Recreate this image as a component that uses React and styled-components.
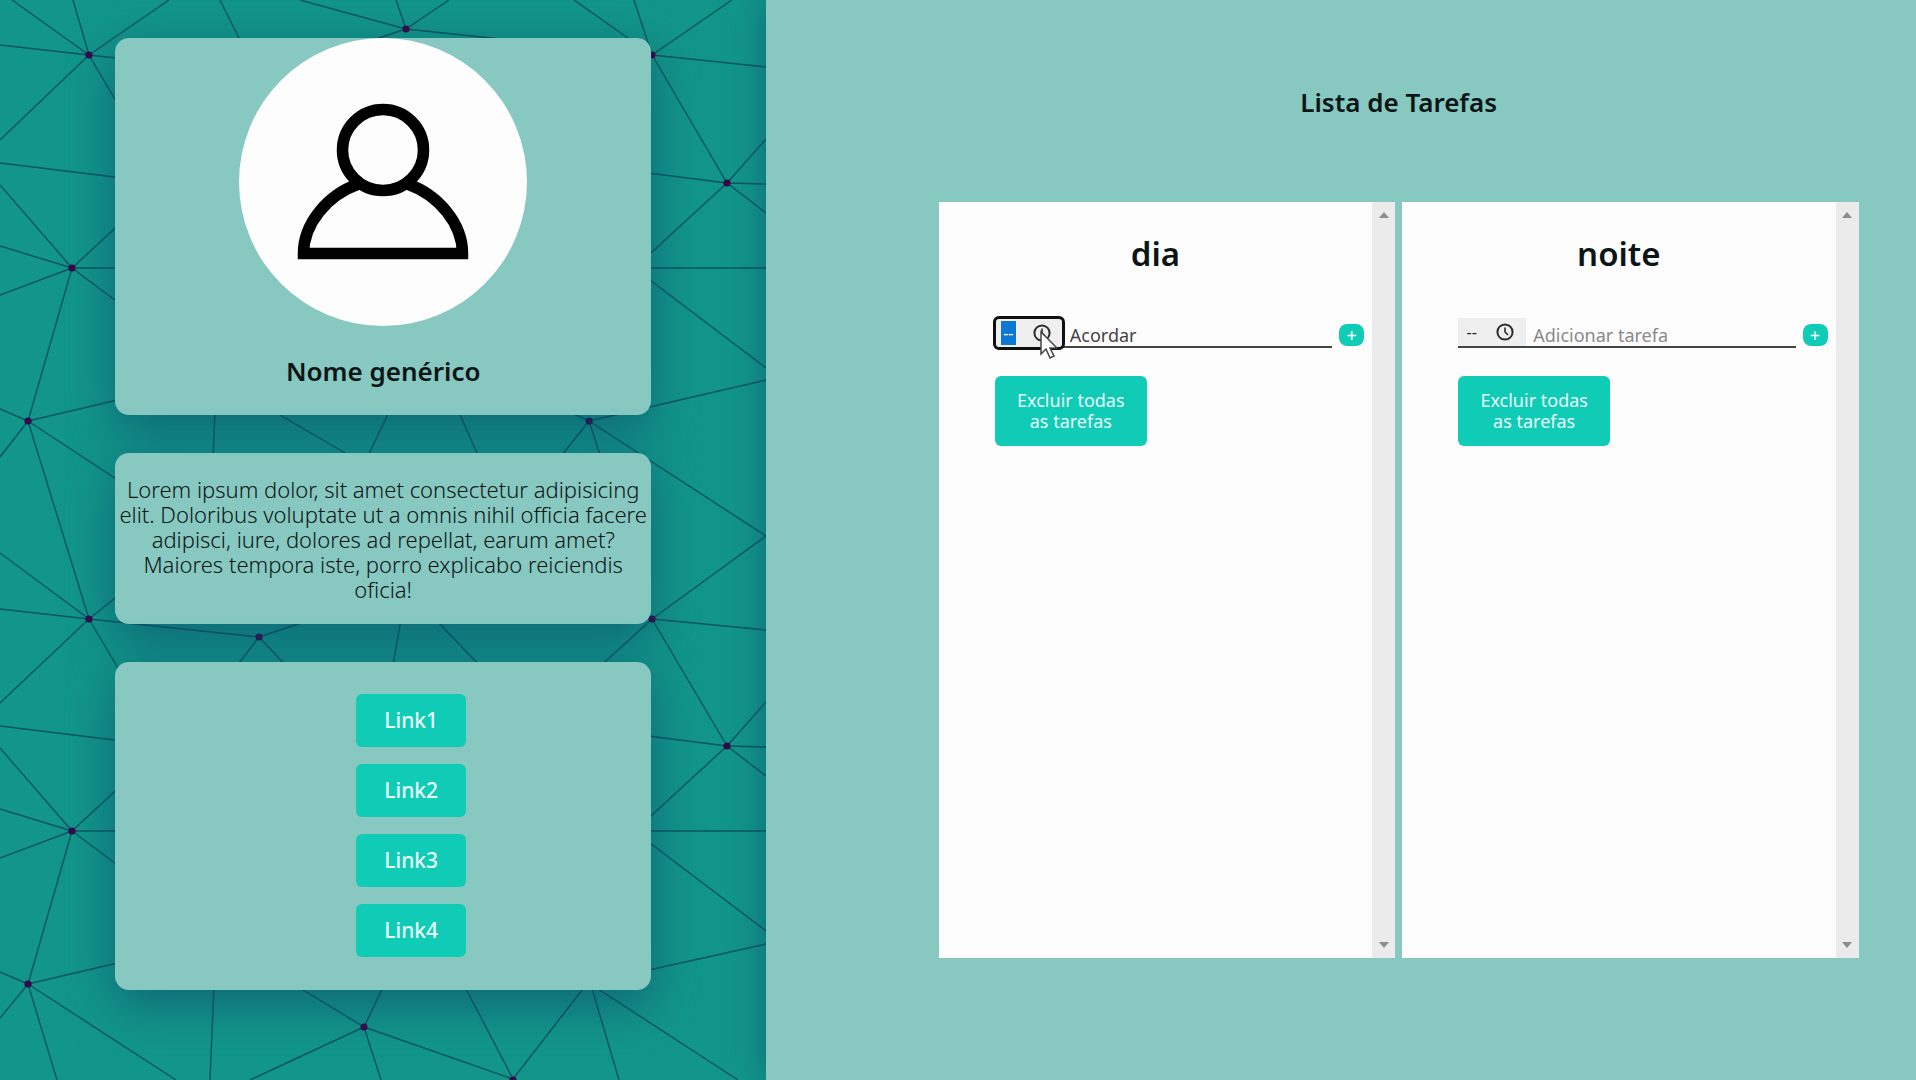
import React from "react";
import styled, { createGlobalStyle } from "styled-components";

const color = {
  panel: "#12968a",
  soft: "#87c8c0",
  accent: "#10cbb5",
  paper: "#fdfdfe",
  ink: "#0c1515",
  line: "#0c5560",
  node: "#36084a",
};

const headingFont = `"Noto Sans", "Open Sans", sans-serif`;
const bodyFont = `"Noto Sans", "Open Sans", sans-serif`;

const GlobalStyle = createGlobalStyle`
  *, *::before, *::after { box-sizing: border-box; }
  body { margin: 0; font-family: ${bodyFont}; color: ${color.ink}; }
  button, input { font: inherit; }
`;

const Page = styled.div`
  display: grid;
  grid-template-columns: 40% 60%;
  min-height: 100vh;
`;

const Sidebar = styled.aside`
  position: relative;
  overflow: hidden;
  display: flex;
  flex-direction: column;
  align-items: center;
  gap: 38px;
  padding: 38px 0 88px;
  background: ${color.panel};
`;

const Web = styled.svg`
  position: absolute;
  top: 0;
  left: 0;
  width: 766px;
  height: 1080px;
`;

const Card = styled.section`
  position: relative;
  width: 70%;
  border-radius: 14px;
  background: ${color.soft};
  box-shadow: 0 14px 48px 2px rgba(14, 70, 105, 0.58);
`;

const ProfileCard = styled(Card)`
  display: flex;
  flex-direction: column;
  align-items: center;
  gap: 26px;
  padding-bottom: 25px;
`;

const Avatar = styled.svg`
  display: block;
  width: 288px;
  height: 288px;
  border-radius: 50%;
  background: ${color.paper};
`;

const Name = styled.h1`
  margin: 0;
  font: 600 26px/38px ${headingFont};
`;

const AboutCard = styled(Card)`
  padding: 24px 0 22px;
  text-align: center;
`;

const About = styled.p`
  margin: 0;
  font-size: 22px;
  font-weight: 300;
  line-height: 25px;
  white-space: nowrap;
`;

const LinkCard = styled(Card)`
  padding: 32px 0 33px 56px;
`;

const LinkList = styled.ul`
  display: flex;
  flex-direction: column;
  align-items: center;
  gap: 17px;
  margin: 0;
  padding: 0;
  list-style: none;
`;

const LinkButton = styled.a`
  display: block;
  padding: 12px 28px;
  border-radius: 6px;
  background: ${color.accent};
  color: #eafffb;
  font-size: 21px;
  font-weight: 500;
  line-height: 29px;
  text-decoration: none;
`;

const Main = styled.main`
  position: relative;
  padding: 0 5% 0 15%;
  background: ${color.soft};
  box-shadow: 0 0 36px rgba(14, 70, 105, 0.6);
`;

const Title = styled.h2`
  margin: 0;
  padding: 83px 0 81px;
  text-align: center;
  font: 600 26px/38px ${headingFont};
`;

const Boards = styled.div`
  display: grid;
  grid-template-columns: 1fr 1fr;
  gap: 7px;
  height: 70vh;
`;

const Board = styled.section`
  display: flex;
  background: ${color.paper};
`;

const BoardBody = styled.div`
  flex: 1;
  min-width: 0;
  padding: 28px 8px 0 56px;
`;

const BoardTitle = styled.h3`
  margin: 0 48px 40px 0;
  text-align: center;
  font: 600 33px/48px ${headingFont};
`;

const ScrollTrack = styled.div`
  display: flex;
  flex-direction: column;
  justify-content: space-between;
  align-items: center;
  width: 23px;
  padding: 10px 0;
  background: #ebebec;
`;

const Arrow = styled.svg`
  width: 10px;
  height: 6px;
  fill: #8d8d90;
`;

const TaskForm = styled.form`
  display: flex;
  align-items: flex-end;
  gap: 7px;
`;

const Field = styled.div`
  display: flex;
  flex: 1;
  min-width: 0;
  height: 30px;
  border-bottom: 2px solid #444;
`;

const TimeBox = styled.div`
  display: flex;
  align-items: center;
  justify-content: space-between;
  width: 68px;
  height: 28px;
  padding: 0 12px 0 6px;
  background: #efefef;
  ${(p) =>
    p.$focused &&
    `height: 30px;
     border-radius: 4px;
     outline: 3px solid #101010;
     outline-offset: -1px;`}
`;

const TimeInput = styled.input`
  width: 15px;
  height: 24px;
  padding: 0;
  border: 0;
  text-align: center;
  font-size: 16px;
  outline: none;
  background: ${(p) => (p.$focused ? "#0c78d3" : "transparent")};
  color: ${(p) => (p.$focused ? "#fff" : "#222")};
`;

const ClockButton = styled.button`
  display: flex;
  padding: 0;
  border: 0;
  background: none;
`;

const TaskInput = styled.input`
  flex: 1;
  min-width: 0;
  padding: 5px 0 0 7px;
  border: 0;
  outline: none;
  background: transparent;
  color: #444;
  font-size: 18px;
  font-weight: 400;
  &::placeholder { color: #8a8a8a; opacity: 1; }
`;

const AddButton = styled.button`
  width: 25px;
  height: 22px;
  margin-bottom: 2px;
  padding: 0;
  border: 0;
  border-radius: 8px;
  background: ${color.accent};
  color: #eafffb;
  font-size: 18px;
  font-weight: 500;
  line-height: 22px;
`;

const ClearButton = styled.button`
  display: block;
  width: 152px;
  margin-top: 28px;
  padding: 14px 8px;
  border: 0;
  border-radius: 6px;
  background: ${color.accent};
  color: #eafffb;
  font-size: 18px;
  line-height: 21px;
`;

const Pointer = styled.svg`
  position: absolute;
  left: 43px;
  top: 12px;
  width: 20px;
  height: 30px;
`;

const TimeArea = styled.div`
  position: relative;
`;

const webLines = [
  [12, 0, 89, 55], [73, 0, 89, 55], [169, 0, 89, 55], [0, 45, 89, 55],
  [89, 55, 0, 140], [89, 55, 164, 183], [89, 55, 259, 74], [0, 163, 164, 183],
  [0, 185, 72, 268], [0, 246, 72, 268], [0, 295, 72, 268], [72, 268, 164, 183],
  [72, 268, 140, 268], [72, 268, 203, 366], [72, 268, 28, 421],
  [0, 409, 28, 421], [28, 421, 0, 457], [28, 421, 160, 390], [28, 421, 203, 536],
  [28, 421, 89, 619],
  [220, 0, 240, 40], [300, 0, 406, 29], [396, 0, 406, 29], [449, 0, 406, 29],
  [406, 29, 370, 41], [406, 29, 500, 39], [574, 0, 652, 55], [634, 0, 652, 55],
  [732, 0, 652, 55], [652, 55, 766, 67], [652, 55, 727, 183],
  [640, 172, 727, 183], [727, 183, 640, 263], [727, 183, 766, 139],
  [727, 183, 766, 184], [727, 183, 766, 213], [640, 268, 766, 268],
  [634, 268, 766, 368], [589, 421, 766, 380],
  [215, 410, 213, 460], [280, 415, 364, 464], [390, 410, 364, 464],
  [458, 410, 480, 460], [589, 421, 550, 470], [589, 421, 605, 470],
  [589, 421, 570, 412], [589, 421, 766, 536], [766, 536, 652, 619],
  [0, 553, 89, 619], [0, 609, 89, 619], [89, 619, 130, 586], [89, 619, 0, 703],
  [89, 619, 164, 746], [89, 619, 259, 637], [259, 637, 310, 620],
  [259, 637, 230, 675], [259, 637, 292, 672], [401, 620, 392, 670],
  [436, 620, 484, 670], [652, 619, 596, 670], [652, 619, 766, 630],
  [652, 619, 727, 746],
  [0, 726, 164, 746], [0, 748, 72, 831], [0, 809, 72, 831], [0, 858, 72, 831],
  [72, 831, 164, 746], [72, 831, 140, 831], [72, 831, 203, 929],
  [72, 831, 28, 984], [0, 972, 28, 984], [28, 984, 0, 1018], [28, 984, 57, 1080],
  [28, 984, 176, 1080], [28, 984, 160, 953],
  [214, 985, 210, 1080], [295, 985, 364, 1027], [384, 985, 364, 1027],
  [364, 1027, 250, 1080], [364, 1027, 381, 1080], [364, 1027, 513, 1079],
  [464, 985, 513, 1079], [513, 1079, 586, 985], [591, 985, 619, 1080],
  [592, 985, 738, 1080],
  [640, 735, 727, 746], [727, 746, 640, 826], [727, 746, 766, 702],
  [727, 746, 766, 747], [727, 746, 766, 776], [640, 831, 766, 831],
  [634, 831, 766, 931], [640, 972, 766, 944],
];

const webNodes = [
  [89, 55], [406, 29], [652, 55], [727, 183], [72, 268], [28, 421], [589, 421],
  [89, 619], [259, 637], [652, 619], [727, 746], [72, 831], [28, 984],
  [364, 1027], [513, 1080],
];

const links = ["Link1", "Link2", "Link3", "Link4"];

function WebBackground() {
  return (
    <Web viewBox="0 0 766 1080" aria-hidden="true">
      <g stroke={color.line} strokeWidth="1.4">
        {webLines.map(([x1, y1, x2, y2], i) => (
          <line key={i} x1={x1} y1={y1} x2={x2} y2={y2} />
        ))}
      </g>
      <g fill={color.node}>
        {webNodes.map(([cx, cy], i) => (
          <circle key={i} cx={cx} cy={cy} r="3.6" />
        ))}
      </g>
    </Web>
  );
}

function Clock() {
  return (
    <svg width="18" height="18" viewBox="0 0 18 18" fill="none" stroke="#2b2b2b" strokeWidth="2" aria-hidden="true">
      <circle cx="9" cy="9" r="7.6" />
      <path d="M9 4.5V9l3 3" strokeWidth="1.6" />
    </svg>
  );
}

function TaskBoard({ id, title, task, focused }) {
  return (
    <Board>
      <BoardBody>
        <BoardTitle>{title}</BoardTitle>
        <TaskForm onSubmit={(e) => e.preventDefault()}>
          <Field>
            <TimeArea>
              <TimeBox $focused={focused}>
                <TimeInput id={`${id}-time`} aria-label="Hora" defaultValue="--" $focused={focused} />
                <ClockButton type="button" aria-label="Escolher hora">
                  <Clock />
                </ClockButton>
              </TimeBox>
              {focused && (
                <Pointer viewBox="0 0 20 30" aria-hidden="true">
                  <path
                    d="M3 2v22l5-5 4 9 4-2-4-8h7z"
                    fill="#fff"
                    stroke="#444"
                    strokeWidth="1.5"
                  />
                </Pointer>
              )}
            </TimeArea>
            <TaskInput
              id={`${id}-task`}
              aria-label="Tarefa"
              placeholder="Adicionar tarefa"
              defaultValue={task}
            />
          </Field>
          <AddButton type="submit">+</AddButton>
        </TaskForm>
        <ClearButton type="button">
          Excluir todas
          <br />
          as tarefas
        </ClearButton>
      </BoardBody>
      <ScrollTrack aria-hidden="true">
        <Arrow viewBox="0 0 10 6"><path d="M5 0l5 6H0z" /></Arrow>
        <Arrow viewBox="0 0 10 6"><path d="M0 0h10L5 6z" /></Arrow>
      </ScrollTrack>
    </Board>
  );
}

export default function App() {
  return (
    <>
      <GlobalStyle />
      <Page>
        <Sidebar>
          <WebBackground />
          <ProfileCard>
            <Avatar viewBox="0 0 288 288" role="img" aria-label="Foto de perfil">
              <g fill="none" stroke="#000" strokeWidth="11.5">
                <circle cx="144" cy="112" r="40.5" />
                <path d="M119.500 146C88 157 64.500 186 64.500 215.500H223.500C223.500 186 200 157 168.500 146" />
              </g>
            </Avatar>
            <Name>Nome genérico</Name>
          </ProfileCard>
          <AboutCard>
            <About>
              Lorem ipsum dolor, sit amet consectetur adipisicing
              <br />
              elit. Doloribus voluptate ut a omnis nihil officia facere
              <br />
              adipisci, iure, dolores ad repellat, earum amet?
              <br />
              Maiores tempora iste, porro explicabo reiciendis
              <br />
              oficia!
            </About>
          </AboutCard>
          <LinkCard>
            <LinkList>
              {links.map((label) => (
                <li key={label}>
                  <LinkButton href={`#${label}`}>{label}</LinkButton>
                </li>
              ))}
            </LinkList>
          </LinkCard>
        </Sidebar>
        <Main>
          <Title>Lista de Tarefas</Title>
          <Boards>
            <TaskBoard id="dia" title="dia" task="Acordar" focused />
            <TaskBoard id="noite" title="noite" />
          </Boards>
        </Main>
      </Page>
    </>
  );
}
